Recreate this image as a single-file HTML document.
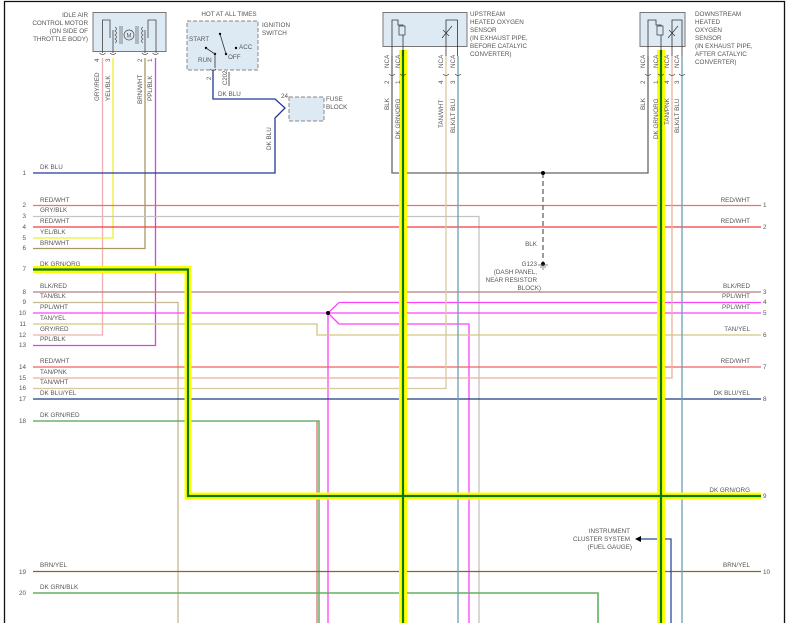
<!DOCTYPE html>
<html><head><meta charset="utf-8"><style>
html,body{margin:0;padding:0;background:#fff;}
svg{display:block;}
text{font-family:"Liberation Sans",sans-serif;font-size:6.3px;fill:#555;}
</style></head><body>
<svg width="789" height="623" viewBox="0 0 789 623" xmlns="http://www.w3.org/2000/svg">
<rect x="0" y="0" width="789" height="623" fill="#fff"/>
<!-- frame -->
<path d="M4.5 623 V1.5 H784.5 V623" fill="none" stroke="#111" stroke-width="1.3"/>

<!-- ========= THIN WIRES ========= -->
<g fill="none" stroke-width="1.3">
<!-- vertical from IAC motor -->
<path d="M102.5 58 V335 H33" stroke="#f0b0b0"/>
<path d="M113 58 V238 H33" stroke="#eeee30"/>
<path d="M145 58 V248.5 H33" stroke="#a89868"/>
<path d="M155.5 58 V345.5 H33" stroke="#e040e0"/>
<!-- DK BLU ignition -->
<path d="M213 70 V99 H275 L285 108 L275 118 V173 H33" stroke="#203a9a"/>
<!-- rows -->
<path d="M33 205.5 H761" stroke="#f07070"/>
<path d="M33 216.5 H479 V623" stroke="#c4c4c4"/>
<path d="M33 227 H761" stroke="#f03c3c"/>
<path d="M33 292 H761" stroke="#b08080"/>
<path d="M33 302.5 H178 V623" stroke="#c8b890"/>
<path d="M33 313 H328" stroke="#ff40ff"/>
<path d="M328 313 L339 302.5 H761 M328 313 H761 M328 313 L339 324 H469 V623 M328 313 V623" stroke="#ff40ff"/>
<path d="M33 324 H317 V335 H761" stroke="#d0c880"/>
<path d="M33 367 H761" stroke="#f06060"/>
<path d="M33 378 H672 V56" stroke="#e8b0a0"/>
<path d="M33 388.5 H446 V56" stroke="#d8c8a0"/>
<path d="M33 399 H761" stroke="#1e3a80"/>
<path d="M33 421 H319 V623" stroke="#50a050"/>
<path d="M317 421 V623" stroke="#e07070"/>
<path d="M33 571.5 H761" stroke="#8a6a10"/>
<path d="M33 593 H598 V623" stroke="#60b060" stroke-width="1.6"/>
<!-- sensor wires -->
<path d="M392 56 V173 H648 V56" stroke="#666"/>
<path d="M458 56 V623" stroke="#6aa0b0"/>
<path d="M682 56 V623" stroke="#6aa0b0"/>
<path d="M637 539 H671 V623" stroke="#2a4a9a"/>
<path d="M543 173 V262" stroke="#666" stroke-dasharray="5,3"/>
</g>
<circle cx="543" cy="173" r="2" fill="#000"/>
<circle cx="328" cy="313" r="2" fill="#000"/>
<circle cx="543" cy="264" r="2" fill="#000"/>
<path d="M538 265 H548 M540 267 H546 M542 269 H544" stroke="#666" stroke-width="0.8"/>
<path d="M635 539 L641 536 V542 Z" fill="#000"/>

<!-- ========= THICK DK GRN/ORG ========= -->
<g fill="none" stroke-linejoin="miter">
<path d="M33 269.5 H188 V496 H761" stroke="#ffff00" stroke-width="7"/>
<path d="M403 50 V623" stroke="#ffff00" stroke-width="8"/>
<path d="M661 50 V623" stroke="#ffff00" stroke-width="8"/>
<path d="M33 269.5 H188 V496 H761" stroke="#0a7a10" stroke-width="2.2"/>
<path d="M403 50 V623" stroke="#0a7a10" stroke-width="2.2"/>
<path d="M661 50 V623" stroke="#0a7a10" stroke-width="2.2"/>
</g>

<!-- ========= COMPONENTS ========= -->
<!-- IAC motor -->
<rect x="93" y="12.5" width="73" height="39" fill="#dde9f3" stroke="#777" stroke-width="1"/>
<path d="M102.5 53 V20 H110 V38 M156 53 V20 H148 V38" fill="none" stroke="#444" stroke-width="0.8"/>
<path d="M113 53 V30 M145 53 V30" stroke="#444" stroke-width="0.8"/>
<path d="M115 27 q3 2 0 4 q3 2 0 4 q3 2 0 4 q3 2 0 4 M143 27 q-3 2 0 4 q-3 2 0 4 q-3 2 0 4 q-3 2 0 4" fill="none" stroke="#444" stroke-width="0.7"/>
<path d="M120 26 V44 M122 26 V44 M136 26 V44 M138 26 V44" stroke="#444" stroke-width="0.6"/>
<circle cx="129" cy="35" r="5" fill="none" stroke="#444" stroke-width="0.7"/>
<text x="126.5" y="37.5" style="font-size:6px">M</text>
<g fill="none" stroke="#444" stroke-width="0.7">
<path d="M99.5 53 q3 3 6 0 M110 53 q3 3 6 0 M142 53 q3 3 6 0 M152.5 53 q3 3 6 0"/>
</g>
<text x="88" y="17" text-anchor="end">IDLE AIR</text>
<text x="88" y="25" text-anchor="end">CONTROL MOTOR</text>
<text x="88" y="33" text-anchor="end">(ON SIDE OF</text>
<text x="88" y="41" text-anchor="end">THROTTLE BODY)</text>
<g style="font-size:6px">
<text transform="translate(99,62) rotate(-90)">4</text>
<text transform="translate(110,62) rotate(-90)">3</text>
<text transform="translate(142,62) rotate(-90)">2</text>
<text transform="translate(152,62) rotate(-90)">1</text>
<text transform="translate(99,101) rotate(-90)">GRY/RED</text>
<text transform="translate(110,101) rotate(-90)">YEL/BLK</text>
<text transform="translate(142,104) rotate(-90)">BRN/WHT</text>
<text transform="translate(152,101) rotate(-90)">PPL/BLK</text>
</g>

<!-- ignition switch -->
<text x="229" y="16" text-anchor="middle">HOT AT ALL TIMES</text>
<rect x="187" y="21" width="71" height="49" fill="#dde9f3" stroke="#888" stroke-dasharray="4,2" stroke-width="1"/>
<text x="262" y="27">IGNITION</text>
<text x="262" y="35">SWITCH</text>
<text x="189" y="41">START</text>
<text x="198" y="62">RUN</text>
<text x="228" y="59">OFF</text>
<text x="239" y="49">ACC</text>
<g fill="#000"><circle cx="220" cy="34" r="1.2"/><circle cx="226" cy="54" r="1.2"/><circle cx="236" cy="48" r="1.2"/><circle cx="206" cy="48" r="1.2"/><circle cx="215" cy="54" r="1.2"/></g>
<path d="M220 34 L226 54 M206 48 L215 54 V68" stroke="#333" stroke-width="0.8" fill="none"/>
<path d="M210 69 q3 3 6 0" stroke="#444" stroke-width="0.7" fill="none"/>
<text transform="translate(211,80) rotate(-90)" style="font-size:6px">2</text>
<text transform="translate(227,85) rotate(-90)" style="font-size:6px">C202</text>
<path d="M229 72 V86" stroke="#333" stroke-width="0.8"/>
<text x="218" y="96">DK BLU</text>
<text x="281" y="98">24</text>
<rect x="289" y="97" width="35" height="24" fill="#dde9f3" stroke="#888" stroke-dasharray="4,2" stroke-width="1"/>
<text x="326" y="101">FUSE</text>
<text x="326" y="109">BLOCK</text>
<text transform="translate(271,150) rotate(-90)">DK BLU</text>

<!-- upstream sensor -->
<rect x="383" y="12.5" width="84" height="34" fill="#dde9f3" stroke="#777" stroke-width="1"/>
<path d="M392 56 V20 H398 V25 H403 V56" fill="none" stroke="#333" stroke-width="0.8"/>
<rect x="399" y="26" width="6" height="9" fill="#dde9f3" stroke="#333" stroke-width="0.7"/>
<path d="M446 56 V20 H457.5 V56" fill="none" stroke="#333" stroke-width="0.8"/>
<path d="M442 38 L452 26 M443 30 L449 36" stroke="#333" stroke-width="0.7"/>
<text x="470" y="16">UPSTREAM</text>
<text x="470" y="24">HEATED OXYGEN</text>
<text x="470" y="32">SENSOR</text>
<text x="470" y="40">(IN EXHAUST PIPE,</text>
<text x="470" y="48">BEFORE CATALYIC</text>
<text x="470" y="56">CONVERTER)</text>
<!-- downstream sensor -->
<rect x="640" y="12.5" width="45" height="34" fill="#dde9f3" stroke="#777" stroke-width="1"/>
<path d="M648 56 V20 H656 V25 H661 V56" fill="none" stroke="#333" stroke-width="0.8"/>
<rect x="657" y="26" width="6" height="9" fill="#dde9f3" stroke="#333" stroke-width="0.7"/>
<path d="M672 56 V20 H682 V56" fill="none" stroke="#333" stroke-width="0.8"/>
<path d="M668 38 L678 26 M669 30 L675 36" stroke="#333" stroke-width="0.7"/>
<text x="695" y="16">DOWNSTREAM</text>
<text x="695" y="24">HEATED</text>
<text x="695" y="32">OXYGEN</text>
<text x="695" y="40">SENSOR</text>
<text x="695" y="48">(IN EXHAUST PIPE,</text>
<text x="695" y="56">AFTER CATALYIC</text>
<text x="695" y="64">CONVERTER)</text>
<g fill="none" stroke="#444" stroke-width="0.7">
<path d="M389 74 q3 3 6 0 M400 74 q3 3 6 0 M443 74 q3 3 6 0 M455 74 q3 3 6 0 M645 74 q3 3 6 0 M658 74 q3 3 6 0 M669 74 q3 3 6 0 M679 74 q3 3 6 0"/>
</g>
<g style="font-size:6px">
<text transform="translate(389,68) rotate(-90)">NCA</text>
<text transform="translate(400,68) rotate(-90)">NCA</text>
<text transform="translate(443,68) rotate(-90)">NCA</text>
<text transform="translate(455,68) rotate(-90)">NCA</text>
<text transform="translate(645,68) rotate(-90)">NCA</text>
<text transform="translate(658,68) rotate(-90)">NCA</text>
<text transform="translate(669,68) rotate(-90)">NCA</text>
<text transform="translate(679,68) rotate(-90)">NCA</text>
<text transform="translate(389,84) rotate(-90)">2</text>
<text transform="translate(400,84) rotate(-90)">1</text>
<text transform="translate(443,84) rotate(-90)">4</text>
<text transform="translate(455,84) rotate(-90)">3</text>
<text transform="translate(645,84) rotate(-90)">2</text>
<text transform="translate(658,84) rotate(-90)">1</text>
<text transform="translate(669,84) rotate(-90)">4</text>
<text transform="translate(679,84) rotate(-90)">3</text>
<text transform="translate(389,110) rotate(-90)">BLK</text>
<text transform="translate(400,139) rotate(-90)">DK GRN/ORG</text>
<text transform="translate(443,128) rotate(-90)">TAN/WHT</text>
<text transform="translate(455,133) rotate(-90)">BLK/LT BLU</text>
<text transform="translate(645,110) rotate(-90)">BLK</text>
<text transform="translate(658,139) rotate(-90)">DK GRN/ORG</text>
<text transform="translate(669,125) rotate(-90)">TAN/PNK</text>
<text transform="translate(679,133) rotate(-90)">BLK/LT BLU</text>
</g>

<!-- ground labels -->
<text x="537" y="246" text-anchor="end">BLK</text>
<text x="537" y="266" text-anchor="end">G123</text>
<text x="537" y="274" text-anchor="end">(DASH PANEL,</text>
<text x="537" y="282" text-anchor="end">NEAR RESISTOR</text>
<text x="541" y="290" text-anchor="end">BLOCK)</text>

<text x="630" y="533" text-anchor="end">INSTRUMENT</text>
<text x="630" y="541" text-anchor="end">CLUSTER SYSTEM</text>
<text x="632" y="549" text-anchor="end">(FUEL GAUGE)</text>

<!-- left labels -->
<g style="font-size:5.8px">
<text x="26" y="175" text-anchor="end">1</text>
<text x="26" y="207" text-anchor="end">2</text>
<text x="26" y="218" text-anchor="end">3</text>
<text x="26" y="229" text-anchor="end">4</text>
<text x="26" y="240" text-anchor="end">5</text>
<text x="26" y="250" text-anchor="end">6</text>
<text x="26" y="271" text-anchor="end">7</text>
<text x="26" y="294" text-anchor="end">8</text>
<text x="26" y="304" text-anchor="end">9</text>
<text x="26" y="315" text-anchor="end">10</text>
<text x="26" y="326" text-anchor="end">11</text>
<text x="26" y="337" text-anchor="end">12</text>
<text x="26" y="347" text-anchor="end">13</text>
<text x="26" y="369" text-anchor="end">14</text>
<text x="26" y="380" text-anchor="end">15</text>
<text x="26" y="390" text-anchor="end">16</text>
<text x="26" y="401" text-anchor="end">17</text>
<text x="26" y="423" text-anchor="end">18</text>
<text x="26" y="574" text-anchor="end">19</text>
<text x="26" y="595" text-anchor="end">20</text>
<text x="763" y="207">1</text>
<text x="763" y="229">2</text>
<text x="763" y="294">3</text>
<text x="763" y="304">4</text>
<text x="763" y="315">5</text>
<text x="763" y="337">6</text>
<text x="763" y="369">7</text>
<text x="763" y="401">8</text>
<text x="763" y="498">9</text>
<text x="763" y="574">10</text>
</g>
<text x="40" y="169">DK BLU</text>
<text x="40" y="202">RED/WHT</text>
<text x="40" y="212">GRY/BLK</text>
<text x="40" y="223">RED/WHT</text>
<text x="40" y="234">YEL/BLK</text>
<text x="40" y="245">BRN/WHT</text>
<text x="40" y="266">DK GRN/ORG</text>
<text x="40" y="288">BLK/RED</text>
<text x="40" y="298">TAN/BLK</text>
<text x="40" y="309">PPL/WHT</text>
<text x="40" y="320">TAN/YEL</text>
<text x="40" y="331">GRY/RED</text>
<text x="40" y="341">PPL/BLK</text>
<text x="40" y="363">RED/WHT</text>
<text x="40" y="374">TAN/PNK</text>
<text x="40" y="384">TAN/WHT</text>
<text x="40" y="395">DK BLU/YEL</text>
<text x="40" y="417">DK GRN/RED</text>
<text x="40" y="567">BRN/YEL</text>
<text x="40" y="589">DK GRN/BLK</text>
<!-- right labels -->
<g text-anchor="end">
<text x="750" y="202">RED/WHT</text>
<text x="750" y="223">RED/WHT</text>
<text x="750" y="288">BLK/RED</text>
<text x="750" y="298">PPL/WHT</text>
<text x="750" y="309">PPL/WHT</text>
<text x="750" y="331">TAN/YEL</text>
<text x="750" y="363">RED/WHT</text>
<text x="750" y="395">DK BLU/YEL</text>
<text x="750" y="492">DK GRN/ORG</text>
<text x="750" y="567">BRN/YEL</text>
</g>
</svg>
</body></html>
